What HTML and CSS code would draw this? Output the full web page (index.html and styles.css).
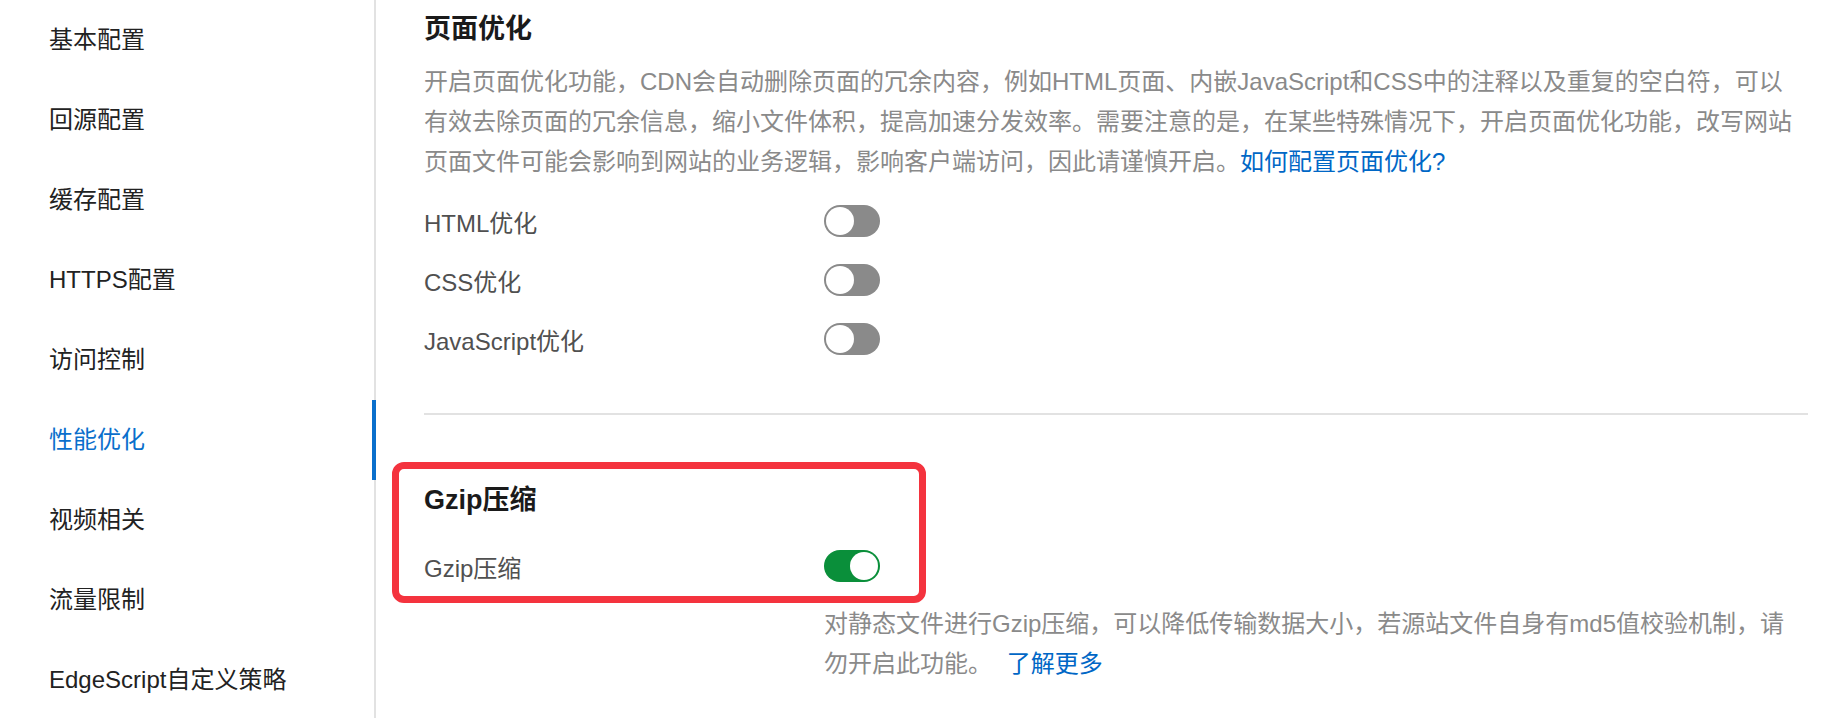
FILE: index.html
```html
<!DOCTYPE html>
<html>
<head>
    <meta charset="UTF-8">
    <meta name="viewport" content="width=device-width, initial-scale=1.0">
    <title>性能优化</title>
    <link rel="stylesheet" href="styles.css">
</head>
<body>
    <div class="layout">
        <ul class="sidebar">
            <li class="nav-item">基本配置</li>
            <li class="nav-item">回源配置</li>
            <li class="nav-item">缓存配置</li>
            <li class="nav-item">HTTPS配置</li>
            <li class="nav-item">访问控制</li>
            <li class="nav-item active">性能优化</li>
            <li class="nav-item">视频相关</li>
            <li class="nav-item">流量限制</li>
            <li class="nav-item">EdgeScript自定义策略</li>
        </ul>
        <div class="content">
            <section class="page-opt">
                <h2 class="section-title">页面优化</h2>
                <p class="desc">开启页面优化功能，CDN会自动删除页面的冗余内容，例如HTML页面、内嵌JavaScript和CSS中的注释以及重复的空白符，可以<br>有效去除页面的冗余信息，缩小文件体积，提高加速分发效率。需要注意的是，在某些特殊情况下，开启页面优化功能，改写网站页面文件可能会影响到网站的业务逻辑，影响客户端访问，因此请谨慎开启。<a class="link" href="#">如何配置页面优化?</a></p>
                <div class="row">
                    <span class="label">HTML优化</span>
                    <span class="switch"></span>
                </div>
                <div class="row">
                    <span class="label">CSS优化</span>
                    <span class="switch"></span>
                </div>
                <div class="row">
                    <span class="label">JavaScript优化</span>
                    <span class="switch"></span>
                </div>
            </section>
            <hr class="divider">
            <section class="gzip">
                <div class="highlight"></div>
                <h2 class="section-title">Gzip压缩</h2>
                <div class="row">
                    <span class="label">Gzip压缩</span>
                    <span class="switch on"></span>
                </div>
                <p class="desc gzip-desc">对静态文件进行Gzip压缩，可以降低传输数据大小，若源站文件自身有md5值校验机制，请勿开启此功能。 <a class="link more" href="#">了解更多</a></p>
            </section>
        </div>
    </div>
</body>
</html>
```

FILE: styles.css
```css
body {
    margin: 0;
    font-family: "Liberation Sans", "Noto Sans CJK SC", sans-serif;
    background-color: #fff;
    color: #222;
}
.layout {
    display: flex;
    height: 718px;
    overflow: hidden;
}
.sidebar {
    list-style: none;
    margin: 0;
    padding: 0;
    width: 374px;
    flex-shrink: 0;
    border-right: 2px solid #e2e2e2;
}
.nav-item {
    position: relative;
    height: 80px;
    line-height: 80px;
    padding-left: 49px;
    font-size: 24px;
    color: #222;
}
.nav-item.active {
    color: #0a6fcc;
}
.nav-item.active::after {
    content: "";
    position: absolute;
    top: 0;
    right: -2px;
    width: 4px;
    height: 80px;
    background-color: #0a6fcc;
}
.content {
    flex: 1;
    padding: 0 22px 0 48px;
}
.section-title {
    margin: 0;
    font-size: 27px;
    line-height: 36px;
    font-weight: bold;
    color: #1a1a1a;
}
.page-opt .section-title {
    margin-top: 11px;
}
.desc {
    margin: 15px 0 0;
    font-size: 24px;
    line-height: 40px;
    color: #8a8a8a;
}
.link {
    color: #0067c6;
    text-decoration: none;
}
.link.more {
    margin-left: 8px;
}
.row {
    display: flex;
    align-items: center;
    height: 32px;
    margin-top: 27px;
}
.page-opt .desc + .row {
    margin-top: 23px;
}
.label {
    width: 400px;
    font-size: 24px;
    color: #505050;
}
.switch {
    position: relative;
    width: 56px;
    height: 32px;
    border-radius: 16px;
    background-color: #8a8a8a;
}
.switch::after {
    content: "";
    position: absolute;
    top: 2px;
    left: 2px;
    width: 28px;
    height: 28px;
    border-radius: 50%;
    background-color: #fff;
}
.switch.on {
    background-color: #0a8f3a;
}
.switch.on::after {
    left: 26px;
}
.divider {
    margin: 58px 0 0;
    border: none;
    border-top: 2px solid #e2e2e2;
}
.gzip {
    position: relative;
    padding-top: 67px;
}
.gzip .row {
    margin-top: 32px;
}
.gzip-desc {
    margin: 22px 0 0 400px;
    max-width: 970px;
}
.highlight {
    position: absolute;
    top: 47px;
    left: -32px;
    width: 520px;
    height: 127px;
    border: 7px solid #f4333e;
    border-radius: 12px;
}
```
